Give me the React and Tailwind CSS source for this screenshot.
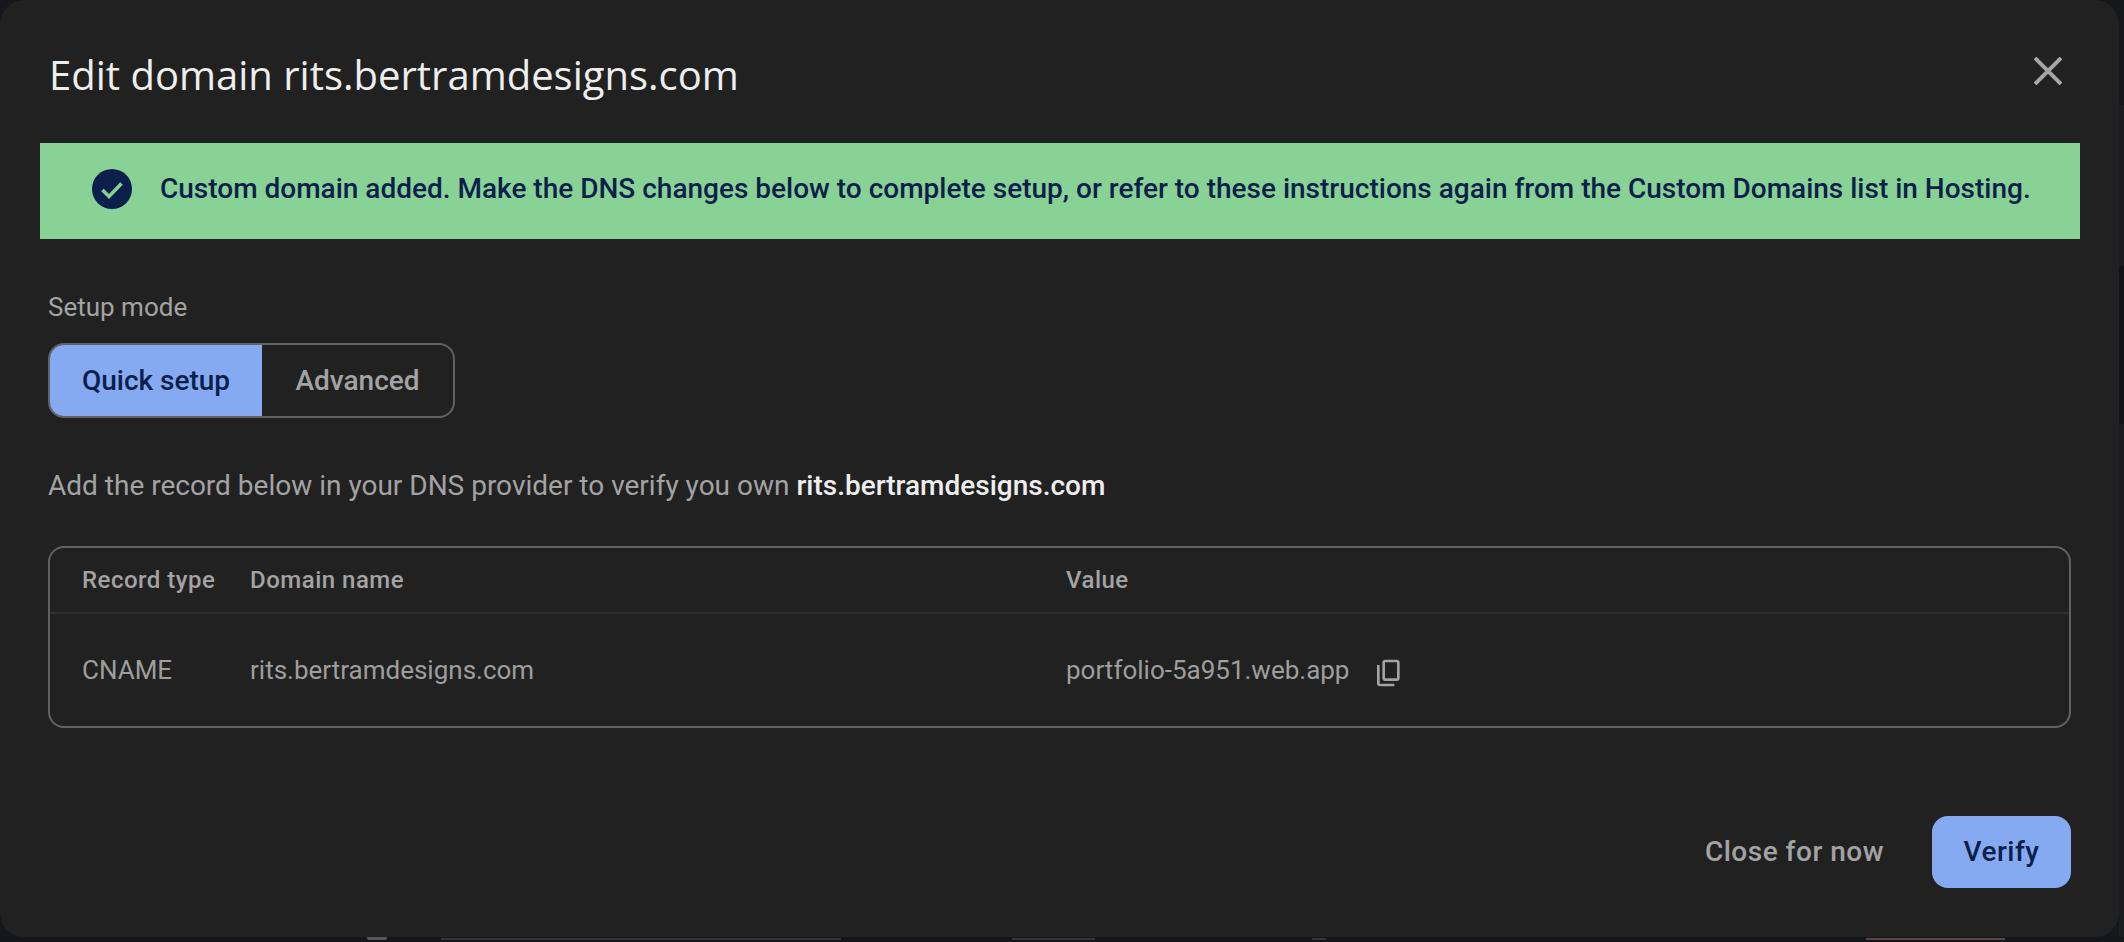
import React from 'react';

const ROBOTO = "font-['Roboto',sans-serif]";

const CopyIcon = () => (
  <svg viewBox="0 0 24 24" className="h-[32px] w-[32px] fill-[#a3a3a3]">
    <path d="M9 18q-.825 0-1.412-.587Q7 16.825 7 16V4q0-.825.588-1.413Q8.175 2 9 2h9q.825 0 1.413.587Q20 3.175 20 4v12q0 .825-.587 1.413Q18.825 18 18 18H9Zm0-2h9V4H9v12Zm-4 6q-.825 0-1.413-.587Q3 20.825 3 20V6h2v14h11v2H5Z" />
  </svg>
);

// the page behind the dialog only shows as a 5px sliver on the right and bottom
const RightSliver = () => (
  <div className="flex w-[5px] flex-col">
    <div className="h-[105px] bg-[#15171c]" />
    <div className="h-[161px] border-b border-[#1a1b1f] bg-[#1b1c20]" />
    <div className="h-[158px] bg-[#111215]" />
    <div className="flex-1 bg-[#1b1c20]" />
  </div>
);

const BottomSliver = () => (
  <div className="flex h-[5px] items-start bg-[#14161b]">
    <div className="ml-[367px] h-[3px] w-[20px] rounded-b-[2px] bg-[#55575a]" />
    <div className="ml-[54px] mt-[1px] h-[2px] w-[400px] bg-[#34363a]" />
    <div className="ml-[171px] mt-[1px] h-[2px] w-[83px] bg-[#34363a]" />
    <div className="ml-[217px] mt-[1px] h-[2px] w-[14px] bg-[#34363a]" />
    <div className="ml-[540px] mt-[1px] h-[2px] w-[139px] bg-[#5b4444]" />
  </div>
);

export default function App() {
  return (
    <div className={`${ROBOTO} h-[942px] w-[2124px] overflow-hidden bg-[#15171c]`}>
      <div className="flex h-[937px]">
        <div className="flex w-[2119px] flex-col rounded-b-[24px] rounded-t-[24px] bg-[#212121]">
          <div className="flex h-[143px] items-start justify-between pl-[49px] pr-[57px] pt-[47px]">
            <h1 className="font-['Open_Sans',sans-serif] text-[40px] font-medium leading-[56px] text-[#eeeeee]">
              Edit domain rits.bertramdesigns.com
            </h1>
            <svg viewBox="0 0 28 28" className="mt-[10px] h-[28px] w-[28px] stroke-[#a6a6a6] stroke-[4]">
              <path d="M1 1l26 26M27 1L1 27" />
            </svg>
          </div>

          <div className="ml-[40px] flex h-[96px] w-[2040px] items-center bg-[#89d295] pb-[4px] pl-[52px] text-[#0b1f4b]">
            <svg viewBox="0 0 40 40" className="h-[40px] w-[40px]">
              <circle cx="20" cy="20" r="20" fill="#0b1f4b" />
              <path d="M10.500 21l6.500 6.500 12.500-13" fill="none" stroke="#89d295" strokeWidth="3.500" />
            </svg>
            <span className="ml-[28px] text-[28px] font-medium">
              Custom domain added. Make the DNS changes below to complete setup, or refer to these instructions again from the Custom Domains list in Hosting.
            </span>
          </div>

          <div className="mt-[52px] pl-[48px] text-[26px] leading-[32px] text-[#a3a3a3]">Setup mode</div>

          <div className="ml-[48px] mt-[20px] flex h-[75px] w-[407px] overflow-hidden rounded-[16px] border-2 border-[#5f6368] text-[28px] font-medium">
            <div className="flex w-[212px] items-center justify-center bg-[#85aaf2] text-[#0b1f4b]">Quick setup</div>
            <div className="flex flex-1 items-center justify-center text-[#a3a3a3]">Advanced</div>
          </div>

          <p className="mt-[50px] pl-[48px] text-[28px] leading-[36px] text-[#a3a3a3]">
            Add the record below in your DNS provider to verify you own{' '}
            <span className="font-medium text-[#eeeeee]">rits.bertramdesigns.com</span>
          </p>

          <div className="ml-[48px] mt-[42px] h-[182px] w-[2023px] rounded-[16px] border-2 border-[#5f6368] text-[#a3a3a3]">
            <div className="flex h-[66px] items-center border-b-2 border-[#2e2e2e] text-[24px] font-medium tracking-[0.5px]">
              <div className="w-[200px] pl-[32px]">Record type</div>
              <div className="w-[816px]">Domain name</div>
              <div>Value</div>
            </div>
            <div className="flex h-[113px] items-center text-[26px] text-[#9e9e9e]">
              <div className="w-[200px] pl-[32px]">CNAME</div>
              <div className="w-[816px]">rits.bertramdesigns.com</div>
              <div>portfolio-5a951.web.app</div>
              <div className="ml-[24px] mt-[4px]">
                <CopyIcon />
              </div>
            </div>
          </div>

          <div className="mt-[88px] flex items-center justify-end pr-[48px] text-[28px] font-medium tracking-[0.5px]">
            <button className="mr-[48px] text-[#a3a3a3]">Close for now</button>
            <button className="h-[72px] w-[139px] rounded-[16px] bg-[#85aaf2] text-[#0b1f4b]">Verify</button>
          </div>
        </div>
        <RightSliver />
      </div>
      <BottomSliver />
    </div>
  );
}
